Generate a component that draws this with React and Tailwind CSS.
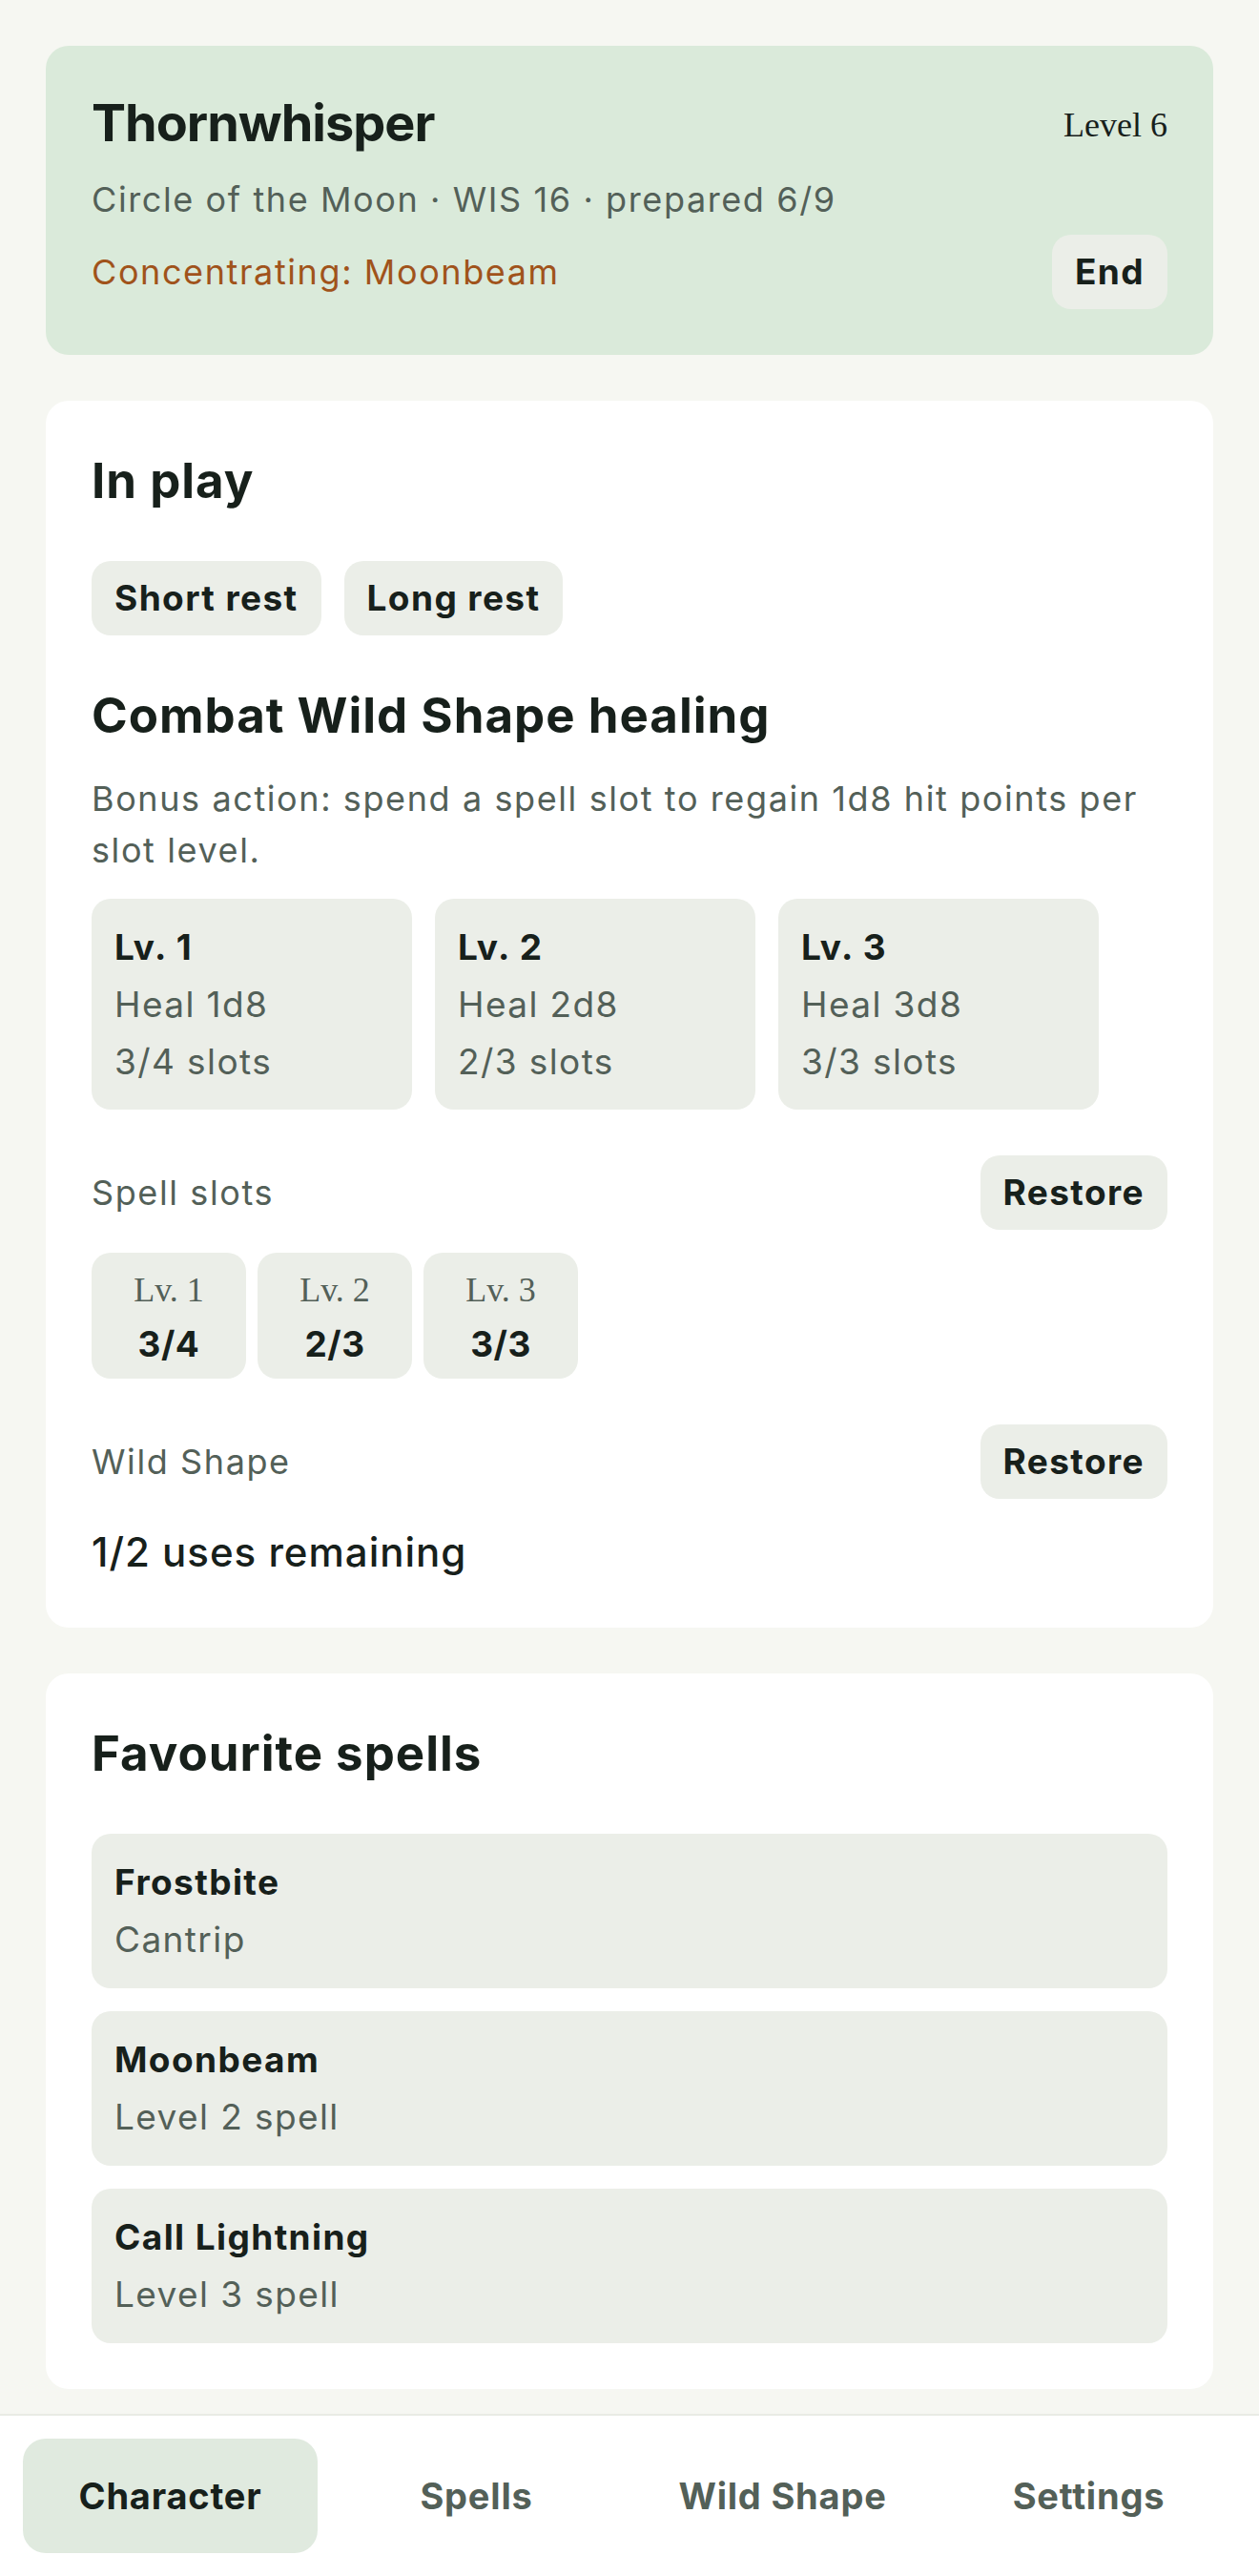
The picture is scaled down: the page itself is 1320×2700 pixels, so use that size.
import { useState } from "react";

const slots = [
  { level: 1, used: 3, max: 4 },
  { level: 2, used: 2, max: 3 },
  { level: 3, used: 3, max: 3 },
];

const favourites = [
  { name: "Frostbite", kind: "Cantrip" },
  { name: "Moonbeam", kind: "Level 2 spell" },
  { name: "Call Lightning", kind: "Level 3 spell" },
];

const tabs = ["Character", "Spells", "Wild Shape", "Settings"];

function Pill({ children }) {
  return (
    <button className="rounded-[20px] bg-[#ebeee8] px-6 py-3 text-[37px] leading-[54px] font-bold tracking-[1.4px] text-[#17201b]">
      {children}
    </button>
  );
}

function Card({ children }) {
  return <section className="rounded-3xl bg-white p-12">{children}</section>;
}

function Heading({ children, className = "" }) {
  return (
    <h2
      className={`text-[51px] leading-[72px] font-bold tracking-[1px] text-[#17201b] ${className}`}
    >
      {children}
    </h2>
  );
}

function Muted({ children, className = "" }) {
  return (
    <p className={`text-[36px] leading-[54px] tracking-[1.6px] text-[#536058] ${className}`}>
      {children}
    </p>
  );
}

export default function App() {
  const [tab, setTab] = useState("Character");

  return (
    <div
      className="flex min-h-screen flex-col bg-[#f6f7f2] text-[#17201b]"
      style={{ fontFamily: "Inter, 'Noto Sans', sans-serif" }}
    >
      <main className="flex flex-1 flex-col gap-12 px-12 pt-12 pb-6">
        {/* character header */}
        <section className="rounded-3xl bg-[#daeada] p-12">
          <div className="flex items-start justify-between">
            <h1 className="text-[54px] leading-[66px] font-bold tracking-[-1px]">Thornwhisper</h1>
            <span
              className="pt-2 text-[36px] leading-[54px]"
              style={{ fontFamily: "'Liberation Serif', serif" }}
            >
              Level 6
            </span>
          </div>
          <Muted className="mt-5">Circle of the Moon · WIS 16 · prepared 6/9</Muted>
          <div className="mt-[10px] flex items-center justify-between">
            <p className="text-[36px] leading-[54px] tracking-[1.6px] text-[#a0531b]">
              Concentrating: Moonbeam
            </p>
            <Pill>End</Pill>
          </div>
        </section>

        <Card>
          <Heading>In play</Heading>
          <div className="mt-12 flex gap-6">
            <Pill>Short rest</Pill>
            <Pill>Long rest</Pill>
          </div>

          <Heading className="mt-12">Combat Wild Shape healing</Heading>
          <Muted className="mt-6">
            Bonus action: spend a spell slot to regain 1d8 hit points per slot level.
          </Muted>
          <div className="mt-6 flex gap-6">
            {slots.map((s) => (
              <div
                key={s.level}
                className="w-[336px] rounded-[20px] bg-[#ebeee8] px-6 pt-[21px] pb-5 text-[37px] leading-[60px] tracking-[1.4px]"
              >
                <div className="font-bold">Lv. {s.level}</div>
                <div className="text-[#536058]">Heal {s.level}d8</div>
                <div className="text-[#536058]">
                  {s.used}/{s.max} slots
                </div>
              </div>
            ))}
          </div>

          <div className="mt-12 flex items-center justify-between">
            <Muted>Spell slots</Muted>
            <Pill>Restore</Pill>
          </div>
          <div className="mt-6 flex gap-3">
            {slots.map((s) => (
              <div
                key={s.level}
                className="w-[162px] rounded-[20px] bg-[#ebeee8] pt-3 pb-[9px] text-center"
              >
                <div
                  className="text-[36px] leading-[54px] text-[#536058]"
                  style={{ fontFamily: "'Liberation Serif', serif" }}
                >
                  Lv. {s.level}
                </div>
                <div className="mt-[3px] text-[37px] leading-[54px] font-bold tracking-[0.5px]">
                  {s.used}/{s.max}
                </div>
              </div>
            ))}
          </div>

          <div className="mt-12 flex items-center justify-between">
            <Muted>Wild Shape</Muted>
            <Pill>Restore</Pill>
          </div>
          <p className="mt-6 text-[42px] leading-[63px] font-medium tracking-[1px]">
            1/2 uses remaining
          </p>
        </Card>

        <Card>
          <Heading>Favourite spells</Heading>
          <div className="mt-12 flex flex-col gap-6">
            {favourites.map((f) => (
              <div
                key={f.name}
                className="rounded-[20px] bg-[#ebeee8] px-6 py-[21px] text-[37px] leading-[60px] tracking-[1.4px]"
              >
                <div className="font-bold">{f.name}</div>
                <div className="text-[#536058]">{f.kind}</div>
              </div>
            ))}
          </div>
        </Card>
      </main>

      <nav className="grid grid-cols-4 gap-3 border-t-2 border-[#e9ebe5] bg-white px-6 py-6">
        {tabs.map((t) => (
          <button
            key={t}
            onClick={() => setTab(t)}
            className={
              t === tab
                ? "h-[120px] rounded-3xl bg-[#e0eadf] text-[38px] font-bold tracking-[0.8px] text-[#17201b]"
                : "h-[120px] rounded-3xl text-[38px] font-bold tracking-[0.8px] text-[#536058]"
            }
          >
            {t}
          </button>
        ))}
      </nav>
    </div>
  );
}
